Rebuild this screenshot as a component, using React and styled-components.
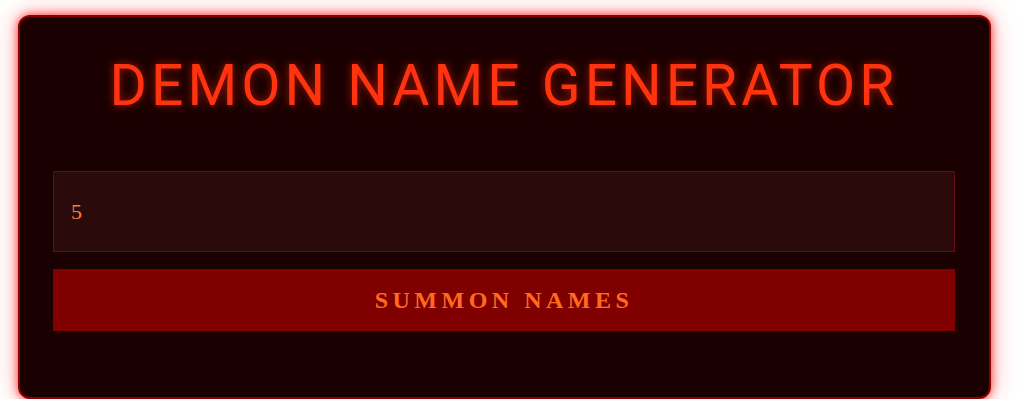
import React, { useState } from 'react';
import styled, { createGlobalStyle } from 'styled-components';

const GlobalStyle = createGlobalStyle`
  html, body {
    margin: 0;
    padding: 0;
    background: #ffffff;
  }
`;

const Page = styled.div`
  padding: 15px 0 0 18px;
`;

const Card = styled.div`
  box-sizing: border-box;
  width: 973px;
  height: 384px;
  padding: 33px 34px 33px 33px;
  background: #1a0000;
  border: 2px solid #8b0000;
  border-radius: 12px;
  box-shadow: 0 0 10px #ff3333, 0 0 26px rgba(255, 70, 70, 0.45);
`;

const Title = styled.h1`
  margin: 1px 0 50px;
  text-align: center;
  font-family: Roboto, "Liberation Sans", sans-serif;
  font-weight: 400;
  font-size: 57px;
  line-height: 70px;
  letter-spacing: 4px;
  color: #ff330f;
  text-shadow: 0 0 8px rgba(255, 40, 0, 0.6);
`;

const Form = styled.div`
  display: flex;
  flex-direction: column;
  gap: 17px;
`;

const CountInput = styled.input`
  box-sizing: border-box;
  width: 100%;
  height: 81px;
  padding: 0 17px;
  background: #2b0a0c;
  border: 1px solid #660b0b;
  outline: none;
  color: #ff7d3a;
  font-family: "Liberation Serif", "Times New Roman", serif;
  font-size: 22px;
`;

const SummonButton = styled.button`
  height: 62px;
  border: none;
  background: #800000;
  color: #ff6a1f;
  font-family: "Liberation Serif", "Times New Roman", serif;
  font-weight: 700;
  font-size: 24px;
  letter-spacing: 4.5px;
  cursor: pointer;
`;

export default function App() {
  const [count, setCount] = useState('5');

  return (
    <Page>
      <GlobalStyle />
      <Card>
        <Title>DEMON NAME GENERATOR</Title>
        <Form>
          <CountInput
            type="number"
            value={count}
            onChange={(e) => setCount(e.target.value)}
          />
          <SummonButton>SUMMON NAMES</SummonButton>
        </Form>
      </Card>
    </Page>
  );
}
